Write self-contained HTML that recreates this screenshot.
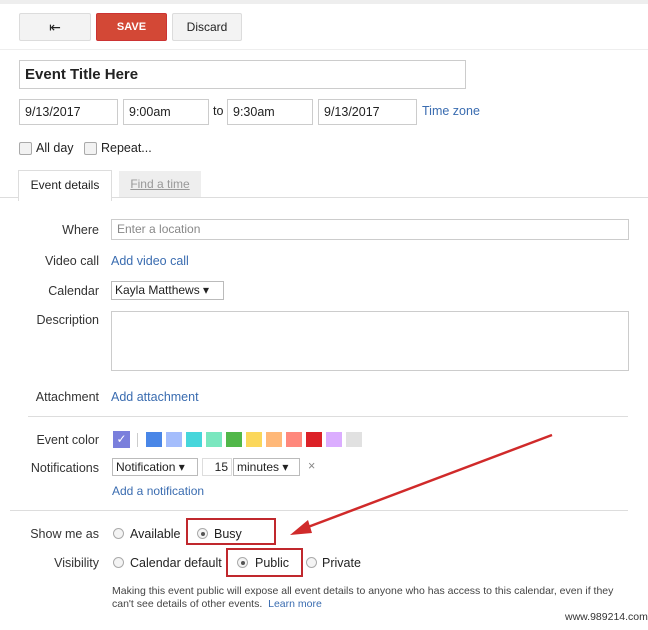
<!DOCTYPE html><html><head><style>
body{margin:0;width:648px;height:630px;background:#fff;font-family:"Liberation Sans",Arial,sans-serif;font-size:12.5px;color:#222;position:relative;overflow:hidden}
.a{position:absolute}
.btn{position:absolute;border:1px solid #dcdcdc;background:#f3f3f3;border-radius:2px;box-sizing:border-box;text-align:center;line-height:26px;font-size:12px}
.inp{position:absolute;border:1px solid #ccc;box-sizing:border-box;padding-left:5px;line-height:24px;font-size:12.5px;height:26px}
.lbl{position:absolute;right:549px;font-size:12.5px;color:#333;text-align:right}
.lnk{color:#3a6cb0}
.cb{position:absolute;width:11px;height:11px;border:1px solid #aaa;border-radius:2px;background:#f2f2f2}
.rad{position:absolute;width:11px;height:11px;border:1px solid #aaa;border-radius:50%;background:#f4f4f4;box-sizing:border-box}
.rad.on:after{content:"";position:absolute;left:2.5px;top:2.5px;width:4px;height:4px;border-radius:50%;background:#555}
.sw{position:absolute;top:432px;width:16px;height:15px}
.hr{position:absolute;height:1px;background:#ddd}
.sel{position:absolute;border:1px solid #bbb;height:18px;line-height:17px;box-sizing:border-box;padding-left:3px;font-size:12px}
</style></head><body>
<div class="a" style="left:0;top:0;width:648px;height:4px;background:#eee"></div>
<div class="btn" style="left:19px;top:13px;width:72px;height:28px;font-size:14px">&#8676;</div>
<div class="btn" style="left:96px;top:13px;width:71px;height:28px;background:#d34836;border-color:#c33;color:#fff;font-weight:bold;font-size:11px">SAVE</div>
<div class="btn" style="left:172px;top:13px;width:70px;height:28px">Discard</div>
<div class="hr" style="left:0;top:49px;width:648px;background:#eee"></div>
<div class="inp" style="left:19px;top:60px;width:447px;height:29px;line-height:27px;font-size:15px;font-weight:bold;padding-left:5px">Event Title Here</div>
<div class="inp" style="left:19px;top:99px;width:99px">9/13/2017</div>
<div class="inp" style="left:123px;top:99px;width:86px">9:00am</div>
<div class="a" style="left:213px;top:104px">to</div>
<div class="inp" style="left:227px;top:99px;width:86px">9:30am</div>
<div class="inp" style="left:318px;top:99px;width:99px">9/13/2017</div>
<div class="a lnk" style="left:422px;top:104px">Time zone</div>
<div class="cb" style="left:19px;top:142px"></div><div class="a" style="left:36px;top:141px">All day</div>
<div class="cb" style="left:84px;top:142px"></div><div class="a" style="left:101px;top:141px">Repeat...</div>
<div class="a" style="left:18px;top:170px;width:92px;height:30px;border:1px solid #ddd;border-bottom:none;background:#fff;text-align:center;line-height:28px;font-size:12px;z-index:2">Event details</div>
<div class="a" style="left:119px;top:171px;width:82px;height:26px;background:#eee;text-align:center;line-height:26px;font-size:12px;color:#999;text-decoration:underline">Find a time</div>
<div class="hr" style="left:0;top:197px;width:648px"></div>
<div class="lbl" style="top:223px">Where</div>
<div class="inp" style="left:111px;top:219px;width:518px;height:21px;line-height:19px;color:#888;font-size:12px">Enter a location</div>
<div class="lbl" style="top:254px">Video call</div><div class="a lnk" style="left:111px;top:254px">Add video call</div>
<div class="lbl" style="top:284px">Calendar</div>
<div class="sel" style="left:111px;top:281px;width:113px;height:19px;font-size:12px">Kayla Matthews ▾</div>
<div class="lbl" style="top:313px">Description</div>
<div class="inp" style="left:111px;top:311px;width:518px;height:60px"></div>
<div class="lbl" style="top:390px">Attachment</div><div class="a lnk" style="left:111px;top:390px">Add attachment</div>
<div class="hr" style="left:28px;top:416px;width:600px"></div>
<div class="lbl" style="top:433px">Event color</div>
<div class="a" style="left:113px;top:431px;width:17px;height:17px;background:#7a7fdc;color:#fff;font-size:12px;text-align:center;line-height:17px">✓</div>
<div class="a" style="left:137px;top:433px;width:1px;height:14px;background:#ccc"></div>
<div class="sw" style="left:146px;background:#4986e7"></div><div class="sw" style="left:166px;background:#a4bdfc"></div><div class="sw" style="left:186px;background:#46d6db"></div><div class="sw" style="left:206px;background:#7ae7bf"></div><div class="sw" style="left:226px;background:#51b749"></div><div class="sw" style="left:246px;background:#fbd75b"></div><div class="sw" style="left:266px;background:#ffb878"></div><div class="sw" style="left:286px;background:#ff887c"></div><div class="sw" style="left:306px;background:#dc2127"></div><div class="sw" style="left:326px;background:#dbadff"></div><div class="sw" style="left:346px;background:#e1e1e1"></div>
<div class="lbl" style="top:461px">Notifications</div>
<div class="sel" style="left:112px;top:458px;width:86px">Notification ▾</div>
<div class="sel" style="left:202px;top:458px;width:30px;text-align:right;padding-right:3px;border-color:#ddd">15</div>
<div class="sel" style="left:233px;top:458px;width:67px">minutes ▾</div>
<div class="a" style="left:308px;top:459px;color:#888">×</div>
<div class="a lnk" style="left:112px;top:484px;font-size:12px">Add a notification</div>
<div class="hr" style="left:10px;top:510px;width:618px"></div>
<div class="lbl" style="top:527px">Show me as</div>
<div class="rad" style="left:113px;top:528px"></div><div class="a" style="left:130px;top:527px">Available</div>
<div class="rad on" style="left:197px;top:528px"></div><div class="a" style="left:214px;top:527px">Busy</div>
<div class="a" style="left:186px;top:518px;width:90px;height:27px;border:2px solid #c0282d;box-sizing:border-box"></div>
<div class="lbl" style="top:556px">Visibility</div>
<div class="rad" style="left:113px;top:557px"></div><div class="a" style="left:130px;top:556px">Calendar default</div>
<div class="rad on" style="left:237px;top:557px"></div><div class="a" style="left:255px;top:556px">Public</div>
<div class="rad" style="left:306px;top:557px"></div><div class="a" style="left:322px;top:556px">Private</div>
<div class="a" style="left:226px;top:548px;width:77px;height:29px;border:2px solid #c0282d;box-sizing:border-box"></div>
<div class="a" style="left:112px;top:585px;width:520px;font-size:10.5px;line-height:13px;color:#444">Making this event public will expose all event details to anyone who has access to this calendar, even if they can't see details of other events. &nbsp;<span class="lnk">Learn more</span></div>
<div class="a" style="left:565px;top:611px;font-size:10.5px;color:#333">www.989214.com</div>
<svg class="a" style="left:0;top:0" width="648" height="630"><line x1="552" y1="435" x2="300" y2="530" stroke="#d02a2a" stroke-width="2.5"/><polygon points="290,535 308,520 312,533" fill="#d02a2a"/></svg>
</body></html>
